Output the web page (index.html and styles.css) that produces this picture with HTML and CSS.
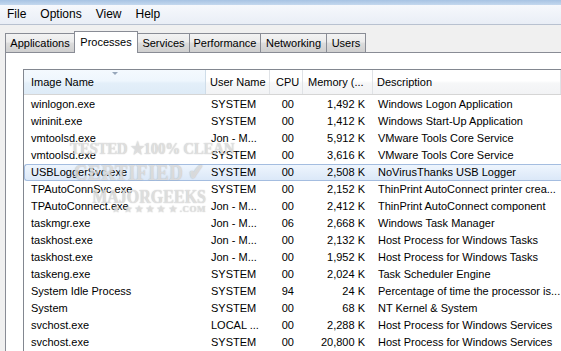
FILE: index.html
```html
<!DOCTYPE html>
<html lang="en">
<head>
    <meta charset="UTF-8">
    <title>Windows Task Manager</title>
    <link rel="stylesheet" href="styles.css">
</head>
<body>
    <div class="titlebar"></div>
    <div class="menubar">
        <span class="menu-item">File</span>
        <span class="menu-item">Options</span>
        <span class="menu-item">View</span>
        <span class="menu-item">Help</span>
    </div>
    <div class="client">
        <div class="tabs">
            <div class="tab tab-applications">Applications</div>
            <div class="tab tab-processes active">Processes</div>
            <div class="tab tab-services">Services</div>
            <div class="tab tab-performance">Performance</div>
            <div class="tab tab-networking">Networking</div>
            <div class="tab tab-users">Users</div>
        </div>
        <div class="panel">
            <div class="list">
                <div class="list-header">
                    <div class="col-head sorted">Image Name<span class="sort-arrow"></span></div>
                    <div class="col-head">User Name</div>
                    <div class="col-head cpu">CPU</div>
                    <div class="col-head mem">Memory (...</div>
                    <div class="col-head">Description</div>
                </div>
                <div class="rows" id="rows"></div>

                <div class="watermark">
                    <div class="wm-line wm-tested">TESTED &#9733;100% CLEAN</div>
                    <div class="wm-line wm-cert">CERTIFIED &#10004;</div>
                    <div class="wm-line wm-major">MAJORGEEKS</div>
                    <div class="wm-line wm-com">&#9733; &#9733; &#9733; &#9733; &#9733; &#9733; .COM</div>
                </div>
            </div>
        </div>
    </div>

    <script>
        const processes = [
            ['winlogon.exe', 'SYSTEM', '00', '1,492 K', 'Windows Logon Application'],
            ['wininit.exe', 'SYSTEM', '00', '1,412 K', 'Windows Start-Up Application'],
            ['vmtoolsd.exe', 'Jon - M...', '00', '5,912 K', 'VMware Tools Core Service'],
            ['vmtoolsd.exe', 'SYSTEM', '00', '3,616 K', 'VMware Tools Core Service'],
            ['USBLoggerSvc.exe', 'SYSTEM', '00', '2,508 K', 'NoVirusThanks USB Logger'],
            ['TPAutoConnSvc.exe', 'SYSTEM', '00', '2,152 K', 'ThinPrint AutoConnect printer crea...'],
            ['TPAutoConnect.exe', 'Jon - M...', '00', '2,412 K', 'ThinPrint AutoConnect component'],
            ['taskmgr.exe', 'Jon - M...', '06', '2,668 K', 'Windows Task Manager'],
            ['taskhost.exe', 'Jon - M...', '00', '2,132 K', 'Host Process for Windows Tasks'],
            ['taskhost.exe', 'Jon - M...', '00', '1,952 K', 'Host Process for Windows Tasks'],
            ['taskeng.exe', 'SYSTEM', '00', '2,024 K', 'Task Scheduler Engine'],
            ['System Idle Process', 'SYSTEM', '94', '24 K', 'Percentage of time the processor is...'],
            ['System', 'SYSTEM', '00', '68 K', 'NT Kernel & System'],
            ['svchost.exe', 'LOCAL ...', '00', '2,288 K', 'Host Process for Windows Services'],
            ['svchost.exe', 'SYSTEM', '00', '20,800 K', 'Host Process for Windows Services']
        ];

        const rowsEl = document.getElementById('rows');
        const classes = ['c-name', 'c-user', 'c-cpu', 'c-mem', 'c-desc'];

        processes.forEach((p, i) => {
            const row = document.createElement('div');
            row.className = 'row';
            if (i === 4) row.classList.add('selected');
            p.forEach((value, j) => {
                const cell = document.createElement('div');
                cell.className = 'cell ' + classes[j];
                cell.textContent = value;
                row.appendChild(cell);
            });
            rowsEl.appendChild(row);
        });
    </script>
</body>
</html>
```

FILE: styles.css
```css
body {
    margin: 0;
    padding: 0;
    width: 561px;
    height: 351px;
    overflow: hidden;
    background-color: #f0f0f0;
    font-family: "Liberation Sans", Arial, sans-serif;
    color: #000;
}

.titlebar {
    height: 5px;
    background: linear-gradient(#a7c3e3, #c4d8ee);
}

.menubar {
    height: 19px;
    display: flex;
    align-items: center;
    font-size: 12px;
    background: linear-gradient(#f6f8fc, #e9eef6);
    border-bottom: 1px solid #b8c1d0;
}

.menu-item {
    padding: 0 7px;
    line-height: 19px;
}

.client {
    padding: 6px 0 0 5px;
}

.tabs {
    display: flex;
    align-items: flex-end;
    height: 21px;
}

.tab {
    box-sizing: border-box;
    height: 19px;
    margin-left: -1px;
    border: 1px solid #898c95;
    border-bottom: none;
    background: linear-gradient(#f3f3f3 0%, #ebebeb 45%, #dddddd 50%, #cfcfcf 100%);
    font-size: 11px;
    line-height: 18px;
    text-align: center;
    white-space: nowrap;
}

.tab-applications {
    margin-left: 0;
    width: 70px;
}

.tab-processes {
    width: 64px;
}

.tab-services {
    width: 53px;
}

.tab-performance {
    width: 72px;
}

.tab-networking {
    width: 67px;
}

.tab-users {
    width: 40px;
}

.tab.active {
    height: 22px;
    margin-bottom: -1px;
    background: #fff;
    line-height: 20px;
    position: relative;
    z-index: 1;
}

.panel {
    box-sizing: border-box;
    height: 300px;
    border-top: 1px solid #898c95;
    border-left: 1px solid #898c95;
    background-color: #fff;
    padding: 16px 0 0 17px;
}

.list {
    position: relative;
    box-sizing: border-box;
    height: 283px;
    overflow: hidden;
    border-top: 1px solid #828790;
    border-left: 1px solid #828790;
    background-color: #fff;
}

.list-header,
.row {
    display: grid;
    grid-template-columns: 182px 64px 33px 70px 1fr;
}

.list-header {
    height: 24px;
    font-size: 11px;
    background: linear-gradient(#ffffff 0%, #ffffff 45%, #f6f7f8 55%, #f2f3f5 100%);
    border-bottom: 1px solid #d5d5d5;
}

.col-head {
    position: relative;
    box-sizing: border-box;
    padding-left: 4px;
    line-height: 25px;
    border-right: 1px solid #dfe2e6;
    white-space: nowrap;
    overflow: hidden;
}

.col-head.sorted {
    padding-left: 7px;
    background: linear-gradient(#f4f9fe 0%, #eef6fd 45%, #e3eff9 55%, #deebf7 100%);
    border-right-color: #cfdde9;
}

.col-head.cpu {
    padding-left: 6px;
}

.col-head.mem {
    padding-left: 5px;
}

.sort-arrow {
    position: absolute;
    top: 2px;
    left: 88px;
    width: 0;
    height: 0;
    border-left: 3px solid transparent;
    border-right: 3px solid transparent;
    border-top: 3px solid #97a7bb;
}

.rows {
    padding-top: 1px;
}

.row {
    box-sizing: border-box;
    height: 17px;
    font-size: 11px;
    line-height: 15px;
    border: 1px solid transparent;
    border-right: none;
}

.row.selected {
    background: linear-gradient(#eef5fd, #dbe8f8);
    border-color: #a4bde0;
    border-radius: 3px 0 0 3px;
}

.cell {
    white-space: nowrap;
    overflow: hidden;
}

.c-name {
    padding-left: 6px;
}

.c-user {
    padding-left: 4px;
}

.c-cpu {
    text-align: right;
    padding-right: 10px;
}

.c-mem {
    text-align: right;
    padding-right: 9px;
}

.c-desc {
    padding-left: 4px;
}

/* faint site stamp over the list */
.watermark {
    position: absolute;
    top: 72px;
    left: 46px;
    width: 136px;
    pointer-events: none;
    font-family: "Liberation Serif", "DejaVu Serif", serif;
    font-weight: bold;
    color: rgba(232, 232, 232, 0.75);
    text-shadow: 0 0 1px rgba(100, 100, 100, 0.45);
    text-align: right;
    white-space: nowrap;
}

.wm-line {
    line-height: 1;
}

.wm-tested {
    height: 21px;
    font-size: 15px;
    letter-spacing: -0.3px;
    transform: scaleY(1.15);
}

.wm-cert {
    height: 26px;
    font-size: 19px;
    letter-spacing: 0.5px;
    padding-right: 1px;
    transform: scaleY(1.2);
}

.wm-major {
    height: 16px;
    font-size: 16px;
    letter-spacing: 0;
    transform: scaleY(1.15);
}

.wm-com {
    font-size: 9px;
    letter-spacing: 0.5px;
}
```
